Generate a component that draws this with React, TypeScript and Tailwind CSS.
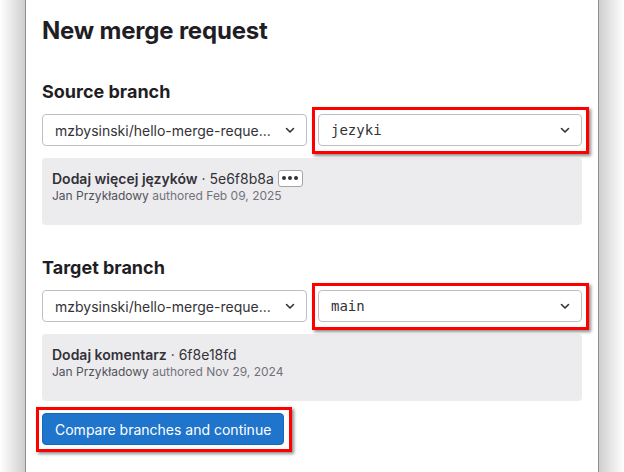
import React from "react";

const Chevron = () => (
  <svg width="16" height="16" viewBox="0 0 16 16" className="text-[#333238]">
    <path d="M4.5 6.5 L8 10 L11.5 6.5" fill="none" stroke="currentColor" strokeWidth="1.6" strokeLinecap="round" strokeLinejoin="round" />
  </svg>
);

const Highlight = () => (
  <div className="pointer-events-none absolute -left-[6px] -right-[7px] -top-[7px] -bottom-[8px] border-[3px] border-[#ff0000] shadow-[2px_2px_3px_rgba(0,0,0,0.45)]" />
);

function BranchRow({ branch }: { branch: string }) {
  return (
    <div className="mt-[10px] flex gap-[11px]">
      <div className="flex h-[32px] w-[265px] items-center justify-between rounded-[4px] border border-[#bfbfc3] bg-white pl-[12px] pr-[8px]">
        <span className="text-[14px] text-[#333238]">mzbysinski/hello-merge-reque...</span>
        <Chevron />
      </div>
      <div className="relative flex-1">
        <div className="flex h-[32px] items-center justify-between rounded-[4px] border border-[#bfbfc3] bg-white pl-[12px] pr-[8px]">
          <span className="text-[14px] text-[#333238] [font-family:'DejaVu_Sans_Mono',monospace]">{branch}</span>
          <Chevron />
        </div>
        <Highlight />
      </div>
    </div>
  );
}

function CommitBox({ title, sha, date, ellipsis }: { title: string; sha: string; date: string; ellipsis?: boolean }) {
  return (
    <div className="mt-[12px] h-[67px] rounded-[4px] bg-[#ececef] pl-[10px] pt-[10px]">
      <div className="flex h-[20px] items-center text-[14px] text-[#333238]">
        <span className="font-semibold">{title}</span>
        <span className="whitespace-pre"> · {sha}</span>
        {ellipsis && (
          <span className="ml-[4px] flex h-[17px] w-[25px] items-center justify-center gap-[2px] rounded-[3px] border border-[#a4a3a8] bg-white">
            <span className="h-[4px] w-[4px] rounded-full bg-[#333238]" />
            <span className="h-[4px] w-[4px] rounded-full bg-[#333238]" />
            <span className="h-[4px] w-[4px] rounded-full bg-[#333238]" />
          </span>
        )}
      </div>
      <div className="h-[16px] text-[12px] leading-[16px] text-[#737278]">
        <span className="text-[#535158]">Jan Przykładowy</span> authored {date}
      </div>
    </div>
  );
}

export default function App() {
  return (
    <div className="flex h-[472px] w-[624px] overflow-hidden bg-white [font-family:Inter,'Noto_Sans',sans-serif]">
      <div className="h-full w-[25px] bg-gradient-to-r from-white to-[#cfcfcf]" />
      <div className="h-full w-[1px] bg-[#8f8f8f]" />
      <div className="h-full w-[572px] bg-white px-[16px] pt-[15px]">
        <h1 className="text-[24px] font-bold leading-[32px] tracking-[-0.2px] text-[#1f1e24]">New merge request</h1>
        <h2 className="mt-[33px] text-[18px] font-bold leading-[24px] text-[#1f1e24]">Source branch</h2>
        <BranchRow branch="jezyki" />
        <CommitBox title="Dodaj więcej języków" sha="5e6f8b8a" date="Feb 09, 2025" ellipsis />
        <h2 className="mt-[31px] text-[18px] font-bold leading-[24px] text-[#1f1e24]">Target branch</h2>
        <BranchRow branch="main" />
        <CommitBox title="Dodaj komentarz" sha="6f8e18fd" date="Nov 29, 2024" />
        <div className="relative mt-[12px] w-fit">
          <button className="flex h-[32px] items-center rounded-[4px] border border-[#1068bf] bg-[#1f75cb] px-[12px] text-[14px] text-white">
            Compare branches and continue
          </button>
          <div className="pointer-events-none absolute -left-[6px] -right-[8px] -top-[6px] -bottom-[7px] border-[3px] border-[#ff0000] shadow-[2px_2px_3px_rgba(0,0,0,0.45)]" />
        </div>
      </div>
      <div className="h-full w-[1px] bg-[#8f8f8f]" />
      <div className="h-full flex-1 bg-gradient-to-r from-[#cfcfcf] to-white" />
    </div>
  );
}
